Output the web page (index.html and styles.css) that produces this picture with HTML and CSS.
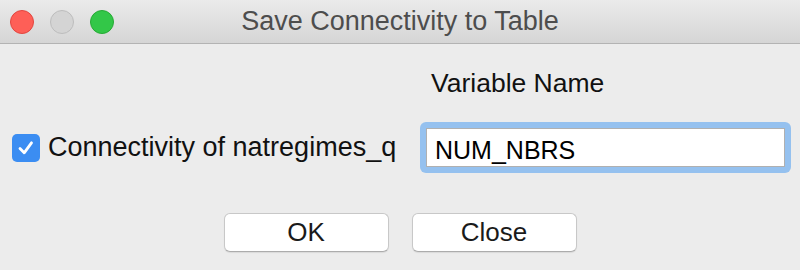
FILE: index.html
```html
<!DOCTYPE html>
<html lang="en">
<head>
    <meta charset="UTF-8">
    <title>Save Connectivity to Table</title>
    <link rel="stylesheet" href="styles.css">
</head>
<body>
    <div class="window">
        <div class="titlebar">
            <div class="lights">
                <span class="light red"></span>
                <span class="light gray"></span>
                <span class="light green"></span>
            </div>
            <div class="title">Save Connectivity to Table</div>
        </div>

        <div class="content">
            <div class="header-row">
                <div class="varname">Variable Name</div>
            </div>
            <div class="field-row">
                <label class="check-label">
                    <span class="checkbox">
                        <svg width="20" height="20" viewBox="0 0 20 20"><path d="M4 10.5 L8.2 14.8 L15.5 4.8" fill="none" stroke="#fff" stroke-width="2.8" stroke-linecap="round" stroke-linejoin="round"/></svg>
                    </span>
                    Connectivity of natregimes_q
                </label>
                <div class="focus-ring">
                    <input class="name-input" type="text" value="NUM_NBRS">
                </div>
            </div>
            <div class="buttons">
                <button class="btn">OK</button>
                <button class="btn">Close</button>
            </div>
        </div>
    </div>
</body>
</html>
```

FILE: styles.css
```css
body {
    margin: 0;
    font-family: "Liberation Sans", Arial, sans-serif;
    background-color: #ececec;
    color: #1a1a1a;
}
.window {
    width: 800px;
    height: 270px;
    background-color: #ececec;
}
.titlebar {
    position: relative;
    height: 43px;
    background: linear-gradient(#ebebeb, #d5d5d5);
    border-bottom: 1px solid #b3b3b3;
    display: flex;
    align-items: center;
    justify-content: center;
}
.lights {
    position: absolute;
    left: 10px;
    top: 10px;
    display: flex;
    gap: 16px;
}
.light {
    width: 24px;
    height: 24px;
    border-radius: 50%;
    box-sizing: border-box;
}
.red {
    background-color: #fe5f57;
    border: 1px solid #e2463f;
}
.gray {
    background-color: #d4d4d4;
    border: 1px solid #bdbdbd;
}
.green {
    background-color: #33c748;
    border: 1px solid #27aa35;
}
.title {
    font-size: 27px;
    color: #4d4d4d;
}
.content {
    display: flex;
    flex-direction: column;
}
.header-row {
    padding-left: 431px;
    padding-top: 24px;
    height: 32px;
}
.varname {
    font-size: 26.5px;
    color: #111;
}
.field-row {
    display: flex;
    align-items: center;
    margin-top: 22px;
    height: 51px;
}
.check-label {
    display: flex;
    align-items: center;
    margin-left: 12px;
    width: 408px;
    font-size: 27px;
    color: #111;
    white-space: nowrap;
}
.checkbox {
    width: 28px;
    height: 28px;
    border-radius: 5px;
    background-color: #3b8df2;
    display: flex;
    align-items: center;
    justify-content: center;
    margin-right: 8px;
    flex-shrink: 0;
}
.focus-ring {
    width: 371px;
    height: 51px;
    box-sizing: border-box;
    padding: 6px;
    border-radius: 6px;
    background-color: #95c1ef;
}
.name-input {
    width: 100%;
    height: 100%;
    box-sizing: border-box;
    border: 1px solid #b0b0b0;
    background: #fff;
    font-family: "Liberation Sans", Arial, sans-serif;
    font-size: 25px;
    color: #000;
    padding: 5px 0 0 8px;
    margin: 0;
    outline: none;
}
.buttons {
    display: flex;
    justify-content: center;
    gap: 23px;
    margin-top: 40px;
}
.btn {
    width: 165px;
    height: 39px;
    background: #fff;
    border: 1px solid #c8c8c8;
    border-bottom-color: #acacac;
    border-radius: 6px;
    font-family: "Liberation Sans", Arial, sans-serif;
    font-size: 26px;
    color: #1a1a1a;
    padding: 0;
    box-shadow: 0 1px 1px rgba(0, 0, 0, 0.08);
}
```
